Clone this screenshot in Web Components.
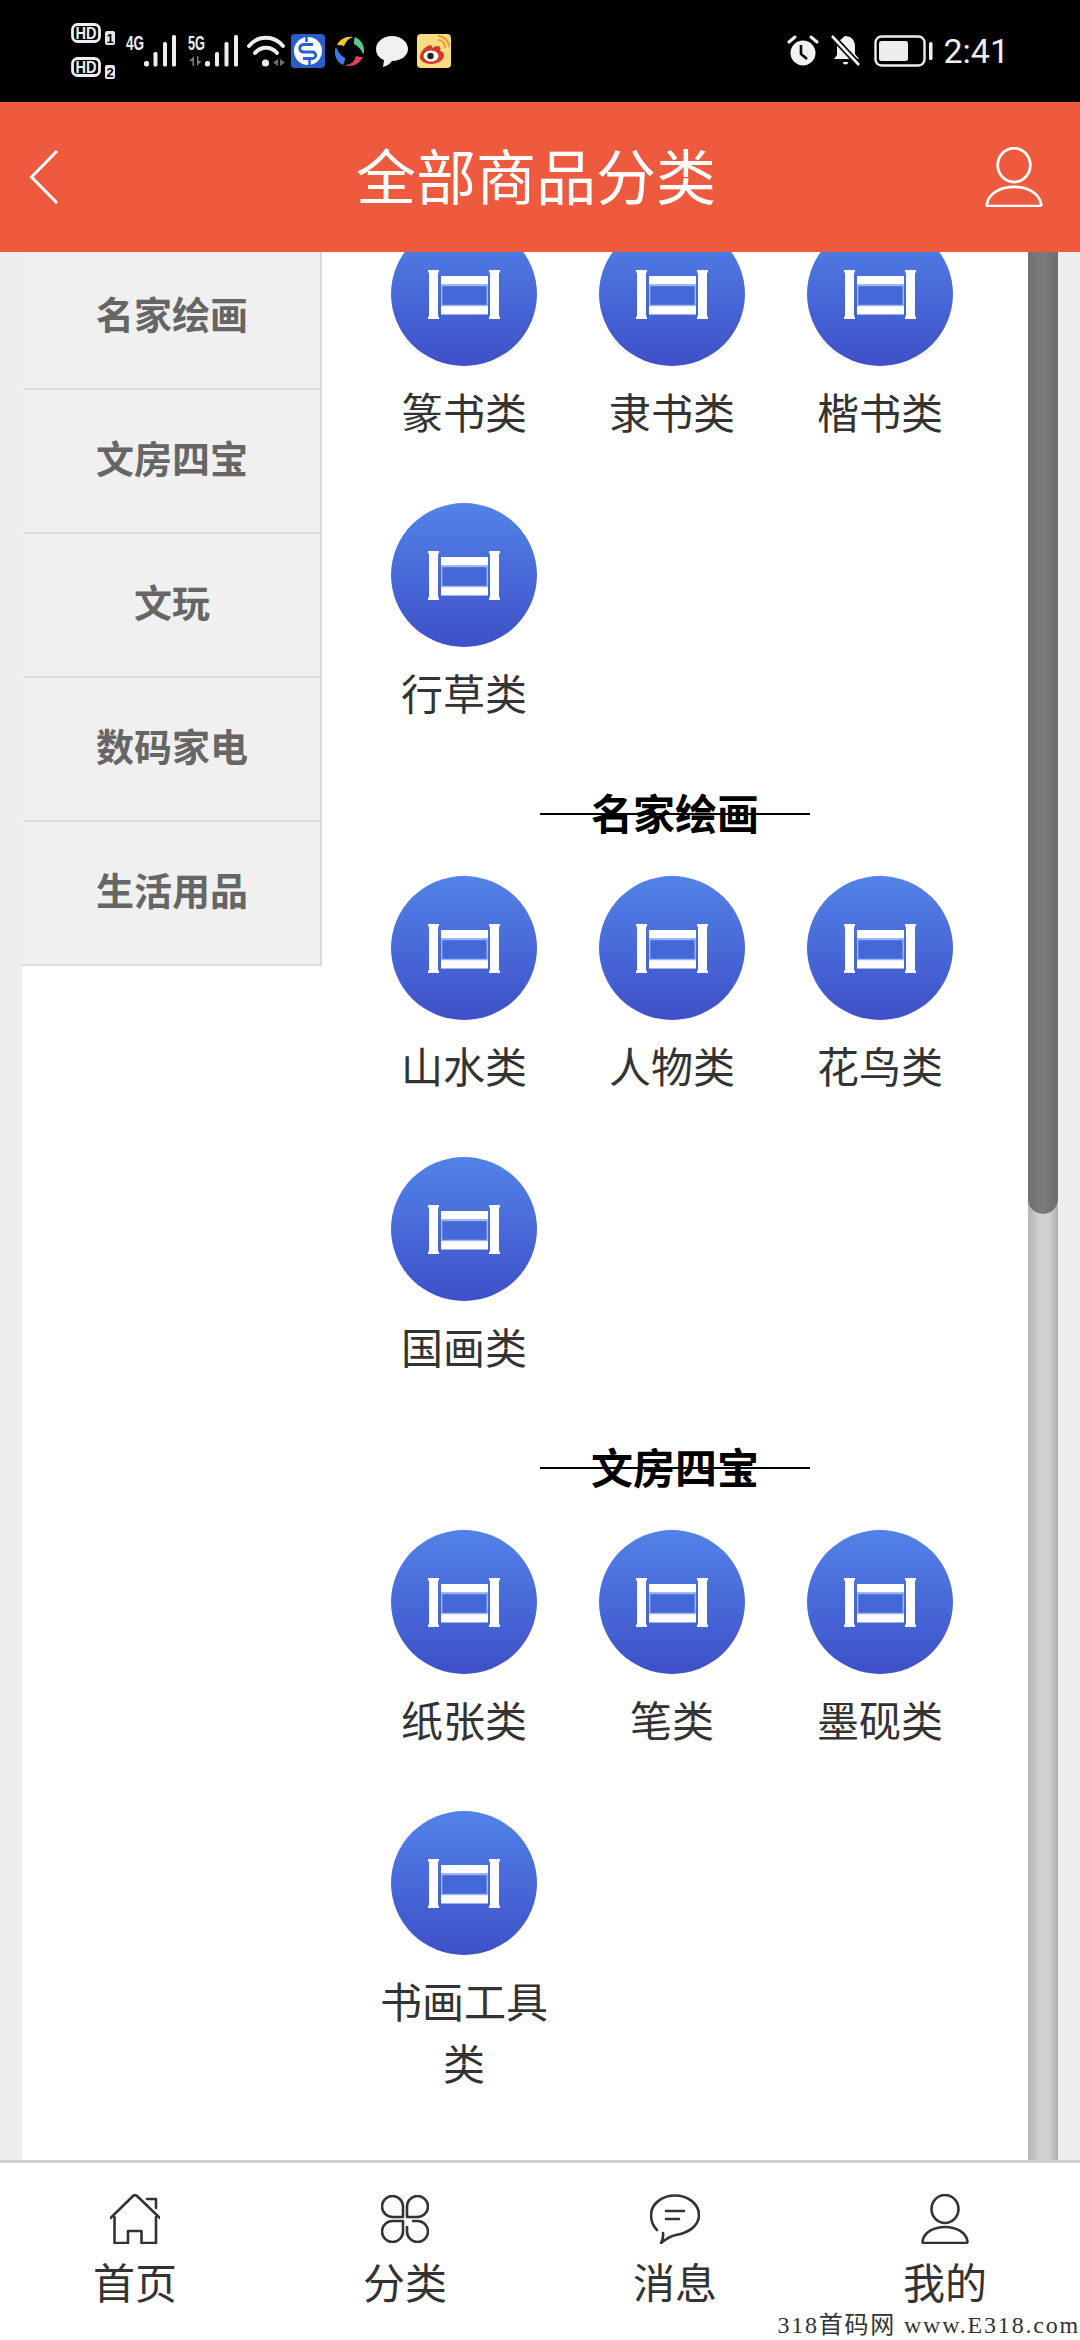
<!DOCTYPE html>
<html lang="zh"><head><meta charset="utf-8"><title>全部商品分类</title>
<style>
html,body{margin:0;padding:0;background:#eee}
body{font-family:"Noto Sans CJK SC","Noto Sans",sans-serif;width:1080px;height:2340px;overflow:hidden}
</style></head><body>
<app-page>
  <status-bar slot="status"></status-bar>
  <app-header slot="header" title="全部商品分类"></app-header>
  <side-menu slot="side">
    <menu-item>名家绘画</menu-item><menu-item>文房四宝</menu-item><menu-item>文玩</menu-item><menu-item>数码家电</menu-item><menu-item>生活用品</menu-item>
  </side-menu>
  <div slot="content">
    <cat-section items="篆书类,隶书类,楷书类,行草类"></cat-section>
    <cat-section heading="名家绘画" items="山水类,人物类,花鸟类,国画类"></cat-section>
    <cat-section heading="文房四宝" items="纸张类,笔类,墨砚类,书画工具类"></cat-section>
  </div>
  <scroll-rail slot="rail"></scroll-rail>
  <bottom-nav slot="nav"></bottom-nav>
</app-page>
<script>
const S='#333';
function def(name,html,init){
  customElements.define(name,class extends HTMLElement{
    connectedCallback(){
      if(this.shadowRoot)return;
      const r=this.attachShadow({mode:'open'});
      r.innerHTML=typeof html==='function'?html(this):html;
      if(init)init(this,r);
    }
  });
}
def('app-page',`<style>
:host{display:flex;flex-direction:column;width:1080px;height:2340px;position:relative;overflow:hidden;background:#eee}
.main{flex:1;min-height:0;display:flex;overflow:hidden;padding:0 22px;background:#eee}
.body{flex:1;display:flex;min-width:0;background:#fff;overflow:hidden}
.side{width:300px;flex:none}
.content{flex:1;min-width:0}
.rail{width:30px;flex:none;display:flex}
.mark{position:absolute;right:0;bottom:2px;font:24px/26px "Liberation Serif","Noto Sans CJK SC",serif;letter-spacing:1.8px;color:#333;white-space:pre;background:#fff}
</style>
<slot name="status"></slot><slot name="header"></slot>
<div class="main"><div class="body"><div class="side"><slot name="side"></slot></div><div class="content"><slot name="content"></slot></div><div class="rail"><slot name="rail"></slot></div></div></div>
<slot name="nav"></slot>
<div class="mark">318首码网 www.E318.com</div>`);

def('status-bar',`<style>
:host{display:flex;align-items:center;justify-content:space-between;height:102px;background:#000;color:#eee;flex:none;padding:0 71px 0 71px;box-sizing:border-box}
.l,.r{display:flex;align-items:center}
svg{display:block;flex:none}
.time{font:34px/38px Roboto,sans-serif;color:#eee;margin-left:9px;margin-top:-1px}
text{font-family:"Liberation Sans",sans-serif;font-weight:700}
</style>
<div class="l">
<svg width="44" height="56" viewBox="0 0 44 56"><rect x="1.500" y="1.500" width="27" height="17" rx="5" fill="none" stroke="#eee" stroke-width="2.800"/><text x="15" y="16.200" font-size="17" textLength="21" lengthAdjust="spacingAndGlyphs" text-anchor="middle" fill="#eee">HD</text><rect x="34" y="8" width="10" height="14" rx="2" fill="#e8e8e8"/><text x="39" y="20" font-size="13" text-anchor="middle" fill="#000">1</text>
<rect x="1.500" y="35.500" width="27" height="17" rx="5" fill="none" stroke="#eee" stroke-width="2.800"/><text x="15" y="50.200" font-size="17" textLength="21" lengthAdjust="spacingAndGlyphs" text-anchor="middle" fill="#eee">HD</text><rect x="34" y="42" width="10" height="14" rx="2" fill="#e8e8e8"/><text x="39" y="54" font-size="13" text-anchor="middle" fill="#000">2</text></svg>
<svg style="margin-left:11px" width="50" height="44" viewBox="0 -6 50 44"><text x="0" y="15" font-size="20" textLength="18" lengthAdjust="spacingAndGlyphs" fill="#eee">4G</text><rect x="18" y="26" width="5" height="5.500" rx="2" fill="#eee"/><rect x="27.500" y="17" width="4" height="14.500" rx="1.500" fill="#eee"/><rect x="37" y="7" width="4" height="24.500" rx="1.500" fill="#eee"/><rect x="46" y="0" width="4" height="31.500" rx="1.500" fill="#eee"/></svg>
<svg style="margin-left:12px" width="50" height="44" viewBox="0 -6 50 44"><text x="0" y="15" font-size="20" textLength="17" lengthAdjust="spacingAndGlyphs" fill="#eee">5G</text><path d="M6 21v10H4.500v-5H1zM9 21v10l4.500-5H10.500v-5z" fill="#7a7a7a"/><rect x="17" y="26" width="5" height="5.500" rx="2" fill="#eee"/><rect x="27" y="17" width="4" height="14.500" rx="1.500" fill="#eee"/><rect x="36.500" y="7" width="4" height="24.500" rx="1.500" fill="#eee"/><rect x="46" y="0" width="4" height="31.500" rx="1.500" fill="#eee"/></svg>
<svg style="margin-left:9px" width="40" height="32" viewBox="0 0 40 32"><g fill="none" stroke="#eee" stroke-width="3.800" stroke-linecap="round"><path d="M2 11C11 0 27 0 36 11"/><path d="M8 18C14 11 24 11 30 18"/></g><circle cx="18.500" cy="28" r="3.600" fill="#eee"/><path d="M31 24l-5 3.500 5 3.500zM33 24l5 3.500-5 3.500z" fill="#6e6e6e"/></svg>
<svg style="margin-left:4px" width="34" height="34" viewBox="0 0 34 34"><rect width="34" height="34" rx="4" fill="#2a5fc9"/><circle cx="17" cy="17" r="14" fill="#fff"/><path d="M15.500 2v6M18.500 26v6" stroke="#2a5fc9" stroke-width="2.500"/><path d="M22 10.500H12.500a3.700 3.700 0 0 0 0 7.500h9a3.200 3.200 0 0 1 0 6.500H12" fill="none" stroke="#2a5fc9" stroke-width="2.800"/></svg>
<svg style="margin-left:9px" width="32" height="33" viewBox="0 0 32 33"><path d="M3 10C6 4 12 1 19 2c-4 1-7 4-9 9-2-1-5-1-7-1z" fill="#f3c62f"/><path d="M21 2c5 2 9 7 9 13 0 2 0 3-1 4-2-5-5-8-9-10 0-3 0-5 1-7z" fill="#58c98e"/><path d="M29 22c-3 6-8 9-14 9-2 0-3 0-4-1 6 0 10-4 11-9 3 1 5 1 7 1z" fill="#e0405a"/><path d="M9 30C3 27 1 22 1 17c0-2 0-4 1-5 2 5 5 9 9 11 0 3-1 5-2 7z" fill="#3d7be6"/></svg>
<svg style="margin-left:10px" width="32" height="31" viewBox="0 0 32 31"><path d="M16 0C7 0 0 6 0 13c0 5 3 9 8 11l-1 7c4-1 7-3 9-6 9 0 16-5 16-12C32 6 25 0 16 0z" fill="#f1f1f1"/></svg>
<svg style="margin-left:9px" width="34" height="34" viewBox="0 0 34 34"><rect width="34" height="34" rx="4" fill="#f7dc83"/><path d="M14 11C8 12 3 18 3 23c0 4 5 7 11 7 7 0 13-4 13-9 0-3-3-4-4-4 1-3 0-5-3-5-2 0-3 1-5 2 0-2-.5-3-1-3z" fill="#d8352b"/><ellipse cx="14" cy="22" rx="7.500" ry="5.500" fill="#fff"/><circle cx="13.500" cy="22" r="3.200" fill="#222"/><path d="M21 6a7 7 0 0 1 7 8M21 2a11 11 0 0 1 11 11" fill="none" stroke="#f09a3a" stroke-width="2"/></svg>
</div>
<div class="r">
<svg width="34" height="32" viewBox="0 0 34 32"><circle cx="17" cy="18" r="12.500" fill="#f1f1f1"/><path d="M15 10v9l6 5" fill="none" stroke="#000" stroke-width="2.600"/><path d="M3 7l6-5M31 7l-6-5" stroke="#f1f1f1" stroke-width="3" stroke-linecap="round"/></svg>
<svg style="margin-left:11px" width="30" height="32" viewBox="0 0 30 32"><path d="M14 1c6 0 10 4 10 10v8l4 5H3l3-4V9l-.5-1z" fill="#f1f1f1"/><path d="M12 27h5a2.500 2.500 0 0 1-5 0z" fill="#f1f1f1"/><path d="M1 1l27 29" stroke="#000" stroke-width="6"/><path d="M1 1l27 29" stroke="#f1f1f1" stroke-width="2.600"/></svg>
<svg style="margin-left:13px" width="60" height="32" viewBox="0 0 60 32"><rect x="1.500" y="1.500" width="49" height="29" rx="6" fill="none" stroke="#eee" stroke-width="2.400"/><rect x="5" y="6" width="29" height="20" rx="2.500" fill="#eee"/><rect x="55" y="7" width="3.500" height="18" rx="1.500" fill="#eee"/></svg>
<div class="time">2:41</div>
</div>`);

def('person-icon',h=>{const c=h.getAttribute('color')||S,w=h.getAttribute('w')||48,t=h.getAttribute('sw')||2.6;
return `<style>:host{display:block}svg{display:block}</style><svg width="${w}" height="${w*50/48}" viewBox="0 0 48 50" fill="none" stroke="${c}" stroke-width="${t}" stroke-linejoin="round"><ellipse cx="24" cy="15" rx="13.500" ry="14"/><path d="M1.500 47.500C3 38 13 33 24 33s21 5 22.500 14.500c.2 1-.5 1.500-1.500 1.500H3c-1 0-1.700-.5-1.500-1.500z"/></svg>`});

def('app-header',h=>`<style>
:host{display:grid;grid-template-columns:1fr auto 1fr;align-items:center;height:150px;background:#ee5a3e;color:#fff;flex:none;padding:0 37px 0 29px;box-sizing:border-box}
h1{margin:0;font:400 60px/84px "Noto Sans CJK SC",sans-serif;padding-bottom:6px}
svg{display:block}
.end{justify-self:end}
</style>
<svg width="30" height="56" viewBox="0 0 30 56"><path d="M28 2L2.500 28 28 54" fill="none" stroke="#fff" stroke-width="3"/></svg>
<h1>${h.getAttribute('title')}</h1>
<person-icon class="end" color="#fff" w="58" sw="2.300"></person-icon>`);

def('side-menu',`<style>:host{display:block;background:#f0f0f0;margin-top:-6px;border-right:2px solid #d9d9d9;box-sizing:border-box}</style><slot></slot>`);
def('menu-item',`<style>:host{display:flex;align-items:center;justify-content:center;height:144px;box-sizing:border-box;border-bottom:2px solid #dedede;font:700 38px/44px "Noto Sans CJK SC",sans-serif;color:#666;padding:0 0 8px 2px}</style><slot></slot>`);

def('cat-section',h=>{
  const head=h.getAttribute('heading');
  const items=h.getAttribute('items').split(',').map(t=>`<cat-item>${t}</cat-item>`).join('');
  return `<style>
  :host{display:block}
  .t{height:60px;display:flex;justify-content:center}
  h2{margin:0;width:270px;height:60px;text-align:center;font:700 42px/56px "Noto Sans CJK SC",sans-serif;color:#000;background:linear-gradient(#000,#000) center/100% 2px no-repeat}
  .g{display:grid;grid-template-columns:repeat(3,208px);padding:32px 0 0 38px}
  </style>${head?`<div class="t"><h2>${head}</h2></div>`:''}<div class="g" style="${head?'':'margin-top:-62px'}">${items}</div>`;
});
def('cat-item',`<style>
:host{display:flex;flex-direction:column;align-items:center;margin-bottom:61px;font:400 42px/62px "Noto Sans CJK SC",sans-serif;color:#333}
.l{width:178px;text-align:center;margin-top:14px}
svg{display:block}
</style>
<svg width="146" height="144" viewBox="0 0 146 144"><defs><linearGradient id="g" x1="0" y1="0" x2="0" y2="1"><stop offset="0" stop-color="#5283e8"/><stop offset="1" stop-color="#3e50c8"/></linearGradient></defs>
<ellipse cx="73" cy="72" rx="73" ry="72" fill="url(#g)"/>
<g fill="#fff"><rect x="38" y="50" width="9" height="45"/><rect x="37" y="48" width="11" height="2.500"/><rect x="37" y="94.500" width="11" height="2.500"/>
<rect x="99" y="50" width="9" height="45"/><rect x="98" y="48" width="11" height="2.500"/><rect x="98" y="94.500" width="11" height="2.500"/>
<rect x="50" y="54" width="47" height="8.500"/><rect x="50" y="84" width="47" height="8.500"/></g>
<rect x="50.700" y="63.500" width="45.600" height="20" fill="#4568d9" stroke="#9fb5ef" stroke-width="1.400"/></svg>
<div class="l"><slot></slot></div>`);

def('scroll-rail',`<style>
:host{display:block;flex:1;background:linear-gradient(90deg,#b4b4b4,#d2d2d2 40%,#cfcfcf 70%,#b0b0b0)}
.th{height:962px;background:linear-gradient(90deg,#707070,#7c7c7c 50%,#6e6e6e);border-radius:0 0 15px 15px}
</style><div class="th"></div>`);

def('nav-item',`<style>
:host{display:flex;flex-direction:column;align-items:center;width:270px;font:400 42px/56px "Noto Sans CJK SC",sans-serif;color:#333}
.i{height:50px;display:flex;align-items:center}
.t{margin-top:9px}
</style><div class="i"><slot name="icon"></slot></div><div class="t"><slot></slot></div>`);

def('bottom-nav',`<style>
:host{display:flex;height:180px;box-sizing:border-box;background:#fff;border-top:3px solid #cecece;flex:none;padding-top:31px}
svg{display:block}
</style>
<nav-item><svg slot="icon" width="50" height="50" viewBox="0 0 50 50" fill="none" stroke="${S}" stroke-width="2.600" stroke-linejoin="round" stroke-linecap="round"><path d="M.5 24L23 2q2-1.500 4 0L50 24"/><path d="M4.500 23V49H18V37H31.500V49H46V23"/><path d="M37 5H46V14"/></svg>首页</nav-item>
<nav-item><svg slot="icon" width="48" height="48" viewBox="0 0 48 48" fill="none" stroke="${S}" stroke-width="2.600" stroke-linejoin="round"><path d="M22 22H11.500A10.500 10.500 0 1 1 22 11.500Z"/><path d="M26 22V11.500A10.500 10.500 0 1 1 36.500 22Z"/><path d="M22 26H11.500A10.500 10.500 0 1 0 22 36.500Z"/><path d="M31 26H36.500A10.500 10.500 0 1 1 26 36.500V31" /></svg>分类</nav-item>
<nav-item><svg slot="icon" width="50" height="50" viewBox="0 0 50 50" fill="none" stroke="${S}" stroke-width="2.600" stroke-linecap="round" stroke-linejoin="round"><path d="M7 36C3 32 1 27 1 21 1 10 12 1.500 25 1.500S49 10 49 21c0 11-11 18-23 20-6 1-10 4-15 8 2-4 2.500-7 2-10"/><path d="M16 17H34M16 25H29"/></svg>消息</nav-item>
<nav-item><person-icon slot="icon" w="48"></person-icon>我的</nav-item>`);
</script>
</body></html>
